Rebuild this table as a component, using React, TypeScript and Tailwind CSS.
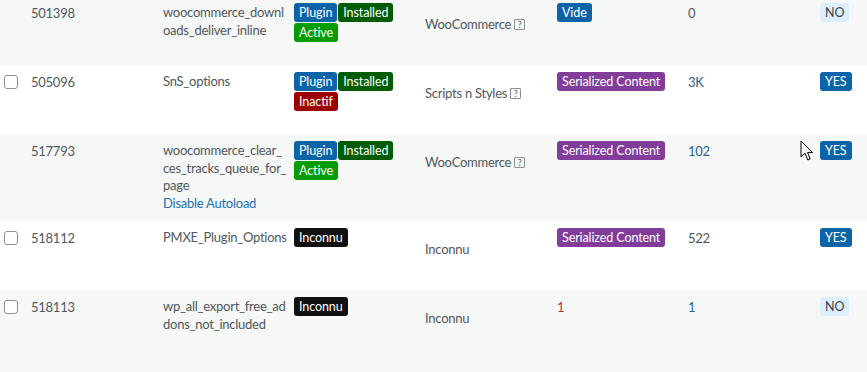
import React from "react";

type Badge = { label: string; cls: string };

const B = {
  plugin: { label: "Plugin", cls: "bg-[#0b64a8] text-white" },
  installed: { label: "Installed", cls: "bg-[#005c00] text-white" },
  active: { label: "Active", cls: "bg-[#009c00] text-white" },
  inactif: { label: "Inactif", cls: "bg-[#9e0000] text-white" },
  inconnu: { label: "Inconnu", cls: "bg-[#111111] text-white" },
  vide: { label: "Vide", cls: "bg-[#0b64a8] text-white" },
  serialized: { label: "Serialized Content", cls: "bg-[#823d9b] text-white" },
  yes: { label: "YES", cls: "bg-[#0b64a8] text-white" },
  no: { label: "NO", cls: "bg-[#ddeffe] text-[#3c434a]" },
};

type Row = {
  check: boolean;
  id: string;
  name: string[];
  link?: string;
  badges: Badge[];
  plugin: string;
  help: boolean;
  type: React.ReactNode;
  typeIsBadge: boolean;
  size: React.ReactNode;
  auto: Badge;
  bg: string;
  pad: string;
};

function Pill({ b }: { b: Badge }) {
  return (
    <span className={`inline-block h-[19px] px-[5px] rounded-[3px] text-[12.5px] tracking-[-0.1px] leading-[19px] whitespace-nowrap ${b.cls}`}>
      {b.label}
    </span>
  );
}

const rows: Row[] = [
  {
    check: false,
    id: "501398",
    name: ["woocommerce_downl", "oads_deliver_inline"],
    badges: [B.plugin, B.installed, B.active],
    plugin: "WooCommerce",
    help: true,
    type: <Pill b={B.vide} />,
    typeIsBadge: true,
    size: <span className="text-[#50575e]">0</span>,
    auto: B.no,
    bg: "bg-[#f6f7f7]",
    pad: "pt-[3px] min-h-[65px]",
  },
  {
    check: true,
    id: "505096",
    name: ["SnS_options"],
    badges: [B.plugin, B.installed, B.inactif],
    plugin: "Scripts n Styles",
    help: true,
    type: <Pill b={B.serialized} />,
    typeIsBadge: true,
    size: <span className="text-[#2b5f8e]">3K</span>,
    auto: B.yes,
    bg: "bg-white",
    pad: "pt-[7px] min-h-[69px]",
  },
  {
    check: false,
    id: "517793",
    name: ["woocommerce_clear_", "ces_tracks_queue_for_", "page"],
    link: "Disable Autoload",
    badges: [B.plugin, B.installed, B.active],
    plugin: "WooCommerce",
    help: true,
    type: <Pill b={B.serialized} />,
    typeIsBadge: true,
    size: <span className="text-[#2b5f8e]">102</span>,
    auto: B.yes,
    bg: "bg-[#f6f7f7]",
    pad: "pt-[7px] pb-[8px] min-h-[86px]",
  },
  {
    check: true,
    id: "518112",
    name: ["PMXE_Plugin_Options"],
    badges: [B.inconnu],
    plugin: "Inconnu",
    help: false,
    type: <Pill b={B.serialized} />,
    typeIsBadge: true,
    size: <span className="text-[#50575e]">522</span>,
    auto: B.yes,
    bg: "bg-white",
    pad: "pt-[7px] min-h-[69px]",
  },
  {
    check: true,
    id: "518113",
    name: ["wp_all_export_free_ad", "dons_not_included"],
    badges: [B.inconnu],
    plugin: "Inconnu",
    help: false,
    type: <span className="text-[#9c3a55]">1</span>,
    typeIsBadge: false,
    size: <span className="text-[#2b5f8e]">1</span>,
    auto: B.no,
    bg: "bg-[#f6f7f7]",
    pad: "pt-[7px] min-h-[90px]",
  },
];

export default function App() {
  return (
    <div
      className="relative w-[867px] h-[372px] overflow-hidden bg-[#f6f7f7] text-[13px] leading-[18px] tracking-[-0.25px] text-[#50575e]"
      style={{ fontFamily: "Lato, 'Noto Sans', sans-serif" }}
    >
      {rows.map((r, i) => (
        <div
          key={i}
          className={`grid grid-cols-[31px_132px_131px_131px_132px_131px_132px_1fr] items-start ${r.bg} ${r.pad}`}
        >
          <div className="pl-[4px] pt-[3px]">
            {r.check && (
              <div className="w-[14px] h-[14px] rounded-[3px] border border-[#8c8f94] bg-white" />
            )}
          </div>
          <div className="pt-px">{r.id}</div>
          <div className="pt-px flex flex-col">
            {r.name.map((n, j) => (
              <span key={j} className="whitespace-nowrap leading-[17.7px]">
                {n}
              </span>
            ))}
            {r.link && <span className="text-[#2271b1] leading-[17.7px]">{r.link}</span>}
          </div>
          <div className="flex flex-wrap gap-[1px] w-[112px]">
            {r.badges.map((b, j) => (
              <Pill key={j} b={b} />
            ))}
          </div>
          <div className="pt-[12px] flex items-center">
            <span>{r.plugin}</span>
            {r.help && (
              <span className="ml-[3px] inline-flex items-center justify-center w-[11px] h-[11px] border border-[#8c8f94] text-[9px] leading-none text-[#50575e] rounded-[1px]">
                ?
              </span>
            )}
          </div>
          <div className={r.typeIsBadge ? "" : "pt-px"}>{r.type}</div>
          <div className="pt-px">{r.size}</div>
          <div>
            <Pill b={r.auto} />
          </div>
        </div>
      ))}
      <svg
        className="absolute left-[800px] top-[140px]"
        width="14"
        height="22"
        viewBox="0 0 14 22"
      >
        <path
          d="M1 1 L1 17 L5 13.2 L7.8 20 L10.2 19 L7.5 12.4 L12.5 12.4 Z"
          fill="white"
          stroke="black"
          strokeWidth="1"
          strokeLinejoin="round"
        />
      </svg>
    </div>
  );
}
